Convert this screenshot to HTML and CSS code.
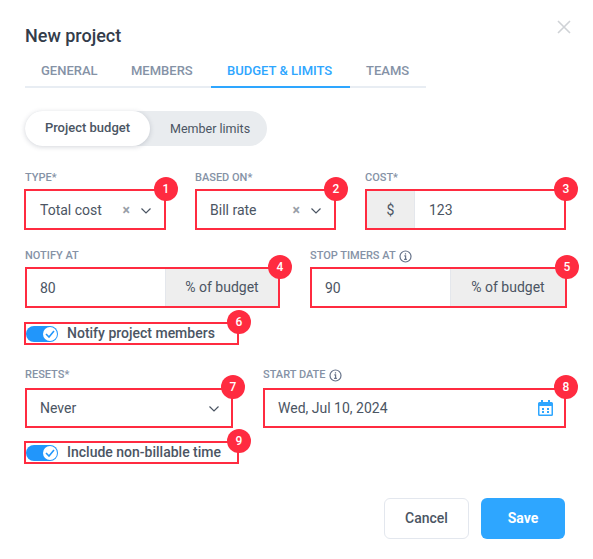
FILE: index.html
```html
<!DOCTYPE html>
<html lang="en">
<head>
<meta charset="utf-8">
<title>New project</title>
<link rel="stylesheet" href="styles.css">
</head>
<body>
<main class="dialog">
  <svg class="close" width="14" height="14" viewBox="0 0 14 14"><path d="M1 1l12 12M13 1L1 13"/></svg>
  <h1 class="title">New project</h1>
  <nav class="tabs">
    <span class="tab tab-general">GENERAL</span>
    <span class="tab tab-members">MEMBERS</span>
    <span class="tab tab-active">BUDGET &amp; LIMITS</span>
    <span class="tab tab-teams">TEAMS</span>
  </nav>
  <div class="segment">
    <span class="seg seg-on">Project budget</span>
    <span class="seg seg-off">Member limits</span>
  </div>

  <section class="row row-1">
    <div class="col w-type">
      <label class="label">TYPE*</label>
      <div class="field field-low">
        <span class="value">Total cost</span>
        <span class="clear">×</span>
        <svg class="chev" width="10" height="6" viewBox="0 0 10 6"><path d="M.5.5l4.500 4.500 4.500-4.500"/></svg>
        <b class="badge">1</b>
      </div>
    </div>
    <div class="col w-based">
      <label class="label">BASED ON*</label>
      <div class="field field-13">
        <span class="value">Bill rate</span>
        <span class="clear">×</span>
        <svg class="chev" width="10" height="6" viewBox="0 0 10 6"><path d="M.5.5l4.500 4.500 4.500-4.500"/></svg>
        <b class="badge">2</b>
      </div>
    </div>
    <div class="col w-cost">
      <label class="label">COST*</label>
      <div class="field field-flush">
        <span class="addon addon-cur">$</span>
        <span class="value value-pad">123</span>
        <b class="badge">3</b>
      </div>
    </div>
  </section>

  <section class="row row-2">
    <div class="col w-notify">
      <label class="label">NOTIFY AT</label>
      <div class="field field-flush">
        <span class="value value-left">80</span>
        <span class="addon addon-pct">% of budget</span>
        <b class="badge">4</b>
      </div>
    </div>
    <div class="col w-stop">
      <label class="label">STOP TIMERS AT
        <svg class="info" width="13" height="13" viewBox="0 0 13 13"><circle cx="6.5" cy="6.5" r="5.500"/><path d="M5.300 5.800h1.300v3.400M5.100 9.300h2.800M6.500 3.300v1.300"/></svg>
      </label>
      <div class="field field-flush">
        <span class="value value-left">90</span>
        <span class="addon addon-pct addon-wide">% of budget</span>
        <b class="badge">5</b>
      </div>
    </div>
  </section>

  <div class="toggle-row toggle-a">
    <span class="switch">
      <span class="knob"><svg width="10" height="8" viewBox="0 0 10 8"><path d="M1 4l3 3 5-6"/></svg></span>
    </span>
    <span class="toggle-text">Notify project members</span>
    <b class="badge">6</b>
  </div>

  <section class="row row-3">
    <div class="col w-resets">
      <label class="label">RESETS*</label>
      <div class="field field-13">
        <span class="value">Never</span>
        <svg class="chev chev-end" width="10" height="6" viewBox="0 0 10 6"><path d="M.5.5l4.500 4.500 4.500-4.500"/></svg>
        <b class="badge">7</b>
      </div>
    </div>
    <div class="col w-start">
      <label class="label">START DATE
        <svg class="info" width="13" height="13" viewBox="0 0 13 13"><circle cx="6.5" cy="6.5" r="5.500"/><path d="M5.300 5.800h1.300v3.400M5.100 9.300h2.800M6.500 3.300v1.300"/></svg>
      </label>
      <div class="field field-13">
        <span class="value">Wed, Jul 10, 2024</span>
        <svg class="cal" width="15" height="16" viewBox="0 0 15 16"><path d="M3 0h2v2h5V0h2v2h1.500A1.500 1.500 0 0 1 15 3.500v11a1.500 1.500 0 0 1-1.500 1.500h-12A1.500 1.500 0 0 1 0 14.500v-11A1.500 1.500 0 0 1 1.500 2H3zM1.500 6v8.500h12V6z" fill-rule="evenodd"/><path d="M4 8h2v2H4zM9 8h2v2H9zM4 11h2v2H4zM9 11h2v2H9z"/></svg>
        <b class="badge">8</b>
      </div>
    </div>
  </section>

  <div class="toggle-row toggle-b">
    <span class="switch">
      <span class="knob"><svg width="10" height="8" viewBox="0 0 10 8"><path d="M1 4l3 3 5-6"/></svg></span>
    </span>
    <span class="toggle-text">Include non-billable time</span>
    <b class="badge">9</b>
  </div>

  <footer class="actions">
    <button class="btn btn-cancel" type="button">Cancel</button>
    <button class="btn btn-save" type="button">Save</button>
  </footer>
</main>
</body>
</html>
```
FILE: styles.css
```css
* { box-sizing: border-box; }
html, body { margin: 0; background: #fff; }
body { font-family: Roboto, "Liberation Sans", sans-serif; color: #4b5563; overflow: hidden; }

.dialog { position: relative; width: 593px; height: 559px; padding: 25px 27px 0 24px; }
.close { position: absolute; left: 557px; top: 20px; fill: none; stroke: #cfd2d6; stroke-width: 1.6; }

.title { margin: 0 0 0 1px; font-size: 18px; line-height: 22px; font-weight: 500; color: #333c4a; }

.tabs { display: flex; margin: 14px 0 0 1px; width: 401px; height: 27px; border-bottom: 2px solid #e8edf3; font-size: 13px; font-weight: 500; color: #8592a6; }
.tab { display: block; height: 27px; line-height: 18px; padding-top: 1px; white-space: nowrap; }
.tab-general { width: 106px; padding-left: 16px; }
.tab-members { width: 80px; }
.tab-active { width: 139px; padding-left: 16px; color: #2ea6ff; border-bottom: 2px solid #2ea6ff; }
.tab-teams { padding-left: 16px; }

.segment { display: flex; align-items: center; margin: 23px 0 0 1px; width: 242px; height: 35px; border-radius: 18px; background: #e9ecef; font-size: 13px; }
.seg { display: block; height: 35px; line-height: 34px; white-space: nowrap; }
.seg-on { width: 125px; text-align: center; border-radius: 18px; background: #fff; color: #4b5563; font-weight: 500; box-shadow: 0 1px 5px rgba(60, 70, 90, .22); }
.seg-off { padding-left: 20px; line-height: 36px; font-size: 12.5px; }

.row { display: flex; align-items: flex-start; }
.col { flex: none; }
.row-1 { margin-top: 25px; }
.row-2 { margin-top: 19px; }
.row-3 { margin-top: 23px; }

.w-type { width: 142px; }
.w-type .label { margin-left: 1px; }
.w-based { width: 141px; margin-left: 29px; }
.w-cost { width: 201px; margin-left: 29px; }
.w-notify { width: 255px; margin-left: 1px; }
.w-stop { width: 257px; margin-left: 30px; }
.w-resets { width: 208px; margin-left: 1px; }
.w-start { width: 303px; margin-left: 30px; }

.label { display: flex; align-items: center; gap: 3px; height: 14px; margin-bottom: 4px; font-size: 11px; font-weight: 500; line-height: 14px; color: #8592a6; }
.row-3 .label { margin-bottom: 6px; }
.info { fill: none; stroke: #66738a; stroke-width: 1.2; }

.field { position: relative; display: flex; align-items: center; height: 41px; padding-left: 14px; border: 2px solid #ff2b40; font-size: 14px; color: #4b5563; background: #fff; }
.field-13 { padding-left: 13px; }
.field-low { margin-top: 1px; }
.field-flush { padding-left: 0; }
.row-3 .field { height: 40px; }
.value { flex: 1; white-space: nowrap; }
.value-pad { padding-left: 14px; }
.value-left { padding-left: 13px; }

.clear { margin-right: 11px; font-size: 14px; font-weight: 700; color: #9aa0a8; line-height: 14px; }
.chev { margin: 2px 13px 0 0; fill: none; stroke: #4b5563; stroke-width: 1.2; }
.chev-end { margin-right: 12px; }
.cal { margin-right: 11px; fill: #2ea6ff; }

.addon { flex: none; display: flex; align-items: center; justify-content: center; height: 37px; background: #eeeeee; }
.addon-cur { width: 48px; border-right: 1px solid #e4e7ec; }
.addon-pct { width: 113px; padding-bottom: 1px; border-left: 1px solid #e4e7ec; }
.addon-wide { width: 115px; }

.badge { position: absolute; right: -14px; top: -14px; display: flex; align-items: center; justify-content: center; width: 24px; height: 24px; border-radius: 50%; background: #ff2b40; color: #fff; font-size: 12px; font-weight: 500; }
.row-3 .badge { top: -15px; }

.toggle-row { position: relative; display: flex; align-items: center; width: 215px; height: 23px; border: 2px solid #ff2b40; }
.toggle-a { margin-top: 14px; }
.toggle-b { margin-top: 13px; }
.switch { display: flex; align-items: center; justify-content: flex-end; width: 32px; height: 16px; padding-right: 1px; border-radius: 8px; background: #2196fb; }
.knob { display: flex; align-items: center; justify-content: center; width: 14px; height: 14px; border-radius: 50%; background: #fff; }
.knob svg { fill: none; stroke: #2196fb; stroke-width: 1.6; }
.toggle-text { margin-left: 9px; font-size: 14px; font-weight: 500; line-height: 17px; white-space: nowrap; color: #4b5563; }

.actions { display: flex; gap: 12px; margin: 34px 0 0 360px; }
.btn { width: 85px; height: 41px; padding: 0 0 2px; border-radius: 6px; font-family: inherit; font-size: 14px; font-weight: 500; }
.btn-cancel { background: #fff; border: 1px solid #e3e7ee; color: #4b5563; }
.btn-save { width: 84px; background: #2ea6ff; border: 0; color: #fff; font-weight: 700; }
```
